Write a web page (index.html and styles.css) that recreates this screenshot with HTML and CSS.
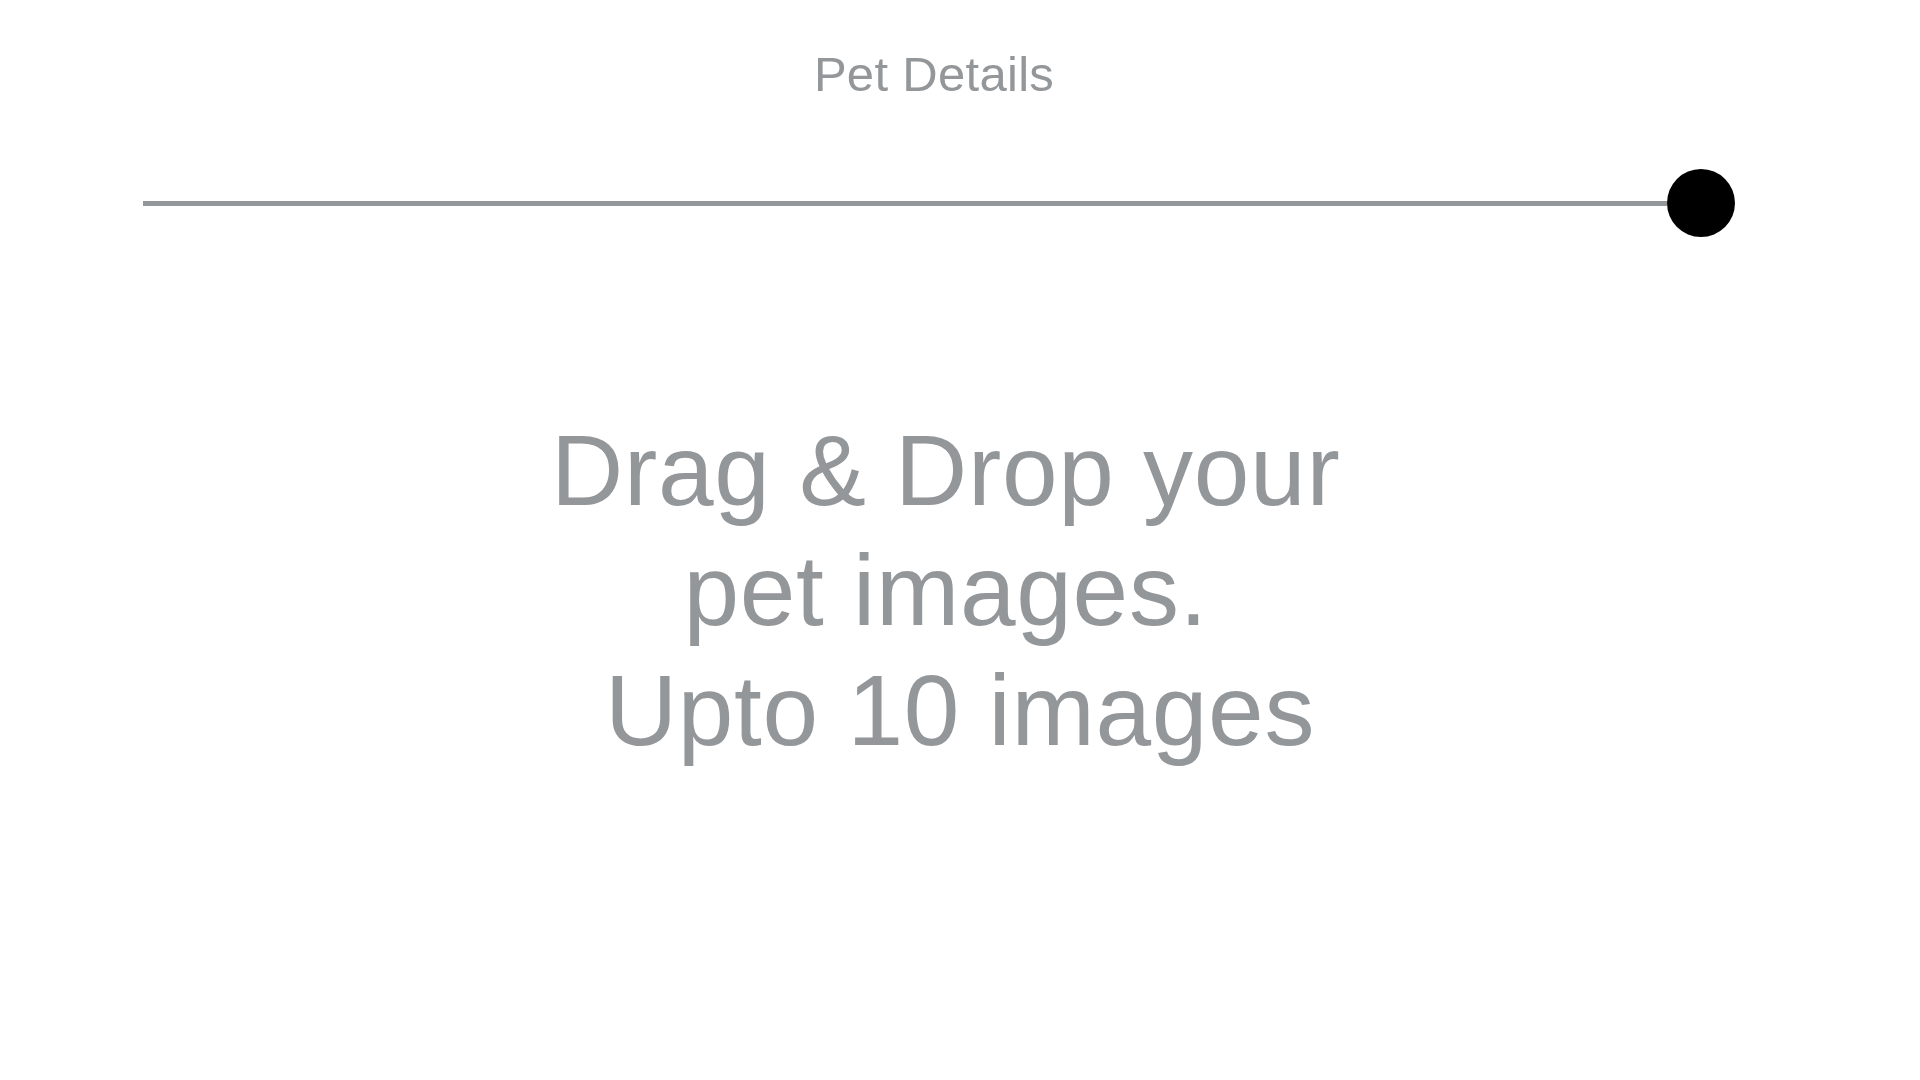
FILE: index.html
```html
<!DOCTYPE html>
<html>
<head>
<meta charset="utf-8">
<link rel="stylesheet" href="styles.css">
</head>
<body>
<div class="page">
  <header class="head">
    <h1 class="title">Pet Details</h1>
    <div class="progress">
      <div class="track"></div>
      <div class="knob"></div>
    </div>
  </header>
  <main class="drop">
    <p class="drop-text">Drag &amp; Drop your <br>pet images. <br>Upto 10 images</p>
  </main>
</div>
</body>
</html>
```

FILE: styles.css
```css
html, body {
  margin: 0;
  padding: 0;
  background: #ffffff;
}
.page {
  width: 1920px;
  height: 1080px;
  font-family: "Liberation Sans", Arial, sans-serif;
  color: #94979a;
}
.head {
  margin-left: 143px;
  width: 1592px;
  padding-top: 46px;
}
.title {
  margin: 0;
  padding-right: 10px;
  font-size: 49px;
  font-weight: normal;
  line-height: 56px;
  letter-spacing: 0.3px;
  text-align: center;
  color: #94979a;
}
.progress {
  margin-top: 67px;
  display: flex;
  align-items: center;
  height: 68px;
}
.track {
  flex: 1;
  height: 5px;
  background: #94979a;
}
.knob {
  width: 68px;
  height: 68px;
  border-radius: 50%;
  background: #000;
}
.drop {
  margin-top: 173px;
}
.drop-text {
  margin: 0;
  text-align: center;
  font-size: 100px;
  line-height: 120px;
  letter-spacing: 0.7px;
  white-space: break-spaces;
}
```
